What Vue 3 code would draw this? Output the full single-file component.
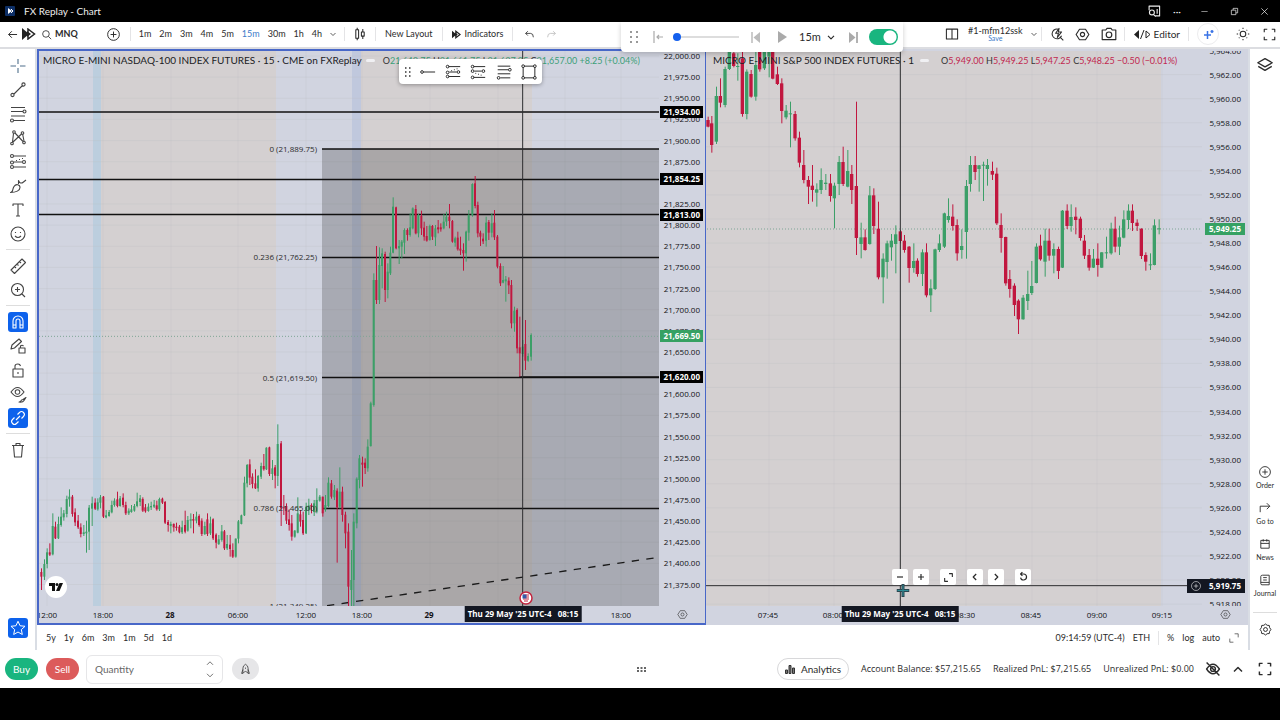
<script setup>
import { h, ref } from 'vue'

const o = (x, y, r) => `M${x - r} ${y}a${r} ${r} 0 1 0 ${2 * r} 0a${r} ${r} 0 1 0 ${-2 * r} 0z`
const expand = 'M3 7V3h4M13 3h4v4M17 13v4h-4M7 17H3v-4'
const hexagon = 'M6 3h8l4.500 7-4.500 7H6l-4.500-7z' + o(10, 10, 2.8)

const icons = {
  back: 'M17 10H4M9 5l-5 5 5 5',
  search: o(9, 9, 6) + 'M13.500 13.500l5 5',
  plus: o(10, 10, 9) + 'M10 5.5v9M5.5 10h9',
  chevron: 'M5 8l5 5 5-5',
  up: 'M5 13l5-5 5 5',
  left: 'M12 5l-5 5 5 5',
  right: 'M8 5l5 5-5 5',
  minus: 'M5 10h10',
  add: 'M5 10h10M10 5v10',
  reset: 'M7 5h4a5 5 0 1 1-5 6M9 2L6 5l3 3',
  maximize: 'M11 3h6v6M9 17H3v-6',
  candles: 'M6 1v3M6 16v3M4 4h4v12H4zM14 3v4M14 13v4M12 7h4v6h-4z',
  undo: 'M7 4L3 8l4 4M3 8h9q5 0 5 7',
  redo: 'M13 4l4 4-4 4M17 8H8q-5 0-5 7',
  layout: 'M2 3h16v14H2zM10 3v14',
  quick: 'M13 3.500a7 7 0 1 0 3.500 9M14 14l5 5M13 2L8 9h4l-1.500 6 6-8H12z',
  hexagon,
  camera: 'M1.500 5H6l1.500-2h5L14 5h4.500v12h-17z' + o(10, 11, 3.5),
  sun: o(10, 10, 4) + 'M10 1v2M10 17v2M1 10h2M17 10h2M4 4l1 1M15 15l1 1M4 16l1-1M15 5l1-1',
  expand,
  cross: 'M10 3v5M10 12v5M2.500 10h5.500M12 10h5.500',
  trend: o(4.500, 15, 1.6) + o(15.500, 4.500, 1.6) + 'M6 14L14.500 5.500',
  fib: 'M3 3.500h14M3 7.500h12M3 12h14M6 16.500h11' + o(16.500, 7.500, 1.5) + o(4, 16.500, 1.5),
  pattern: o(6, 4, 1.3) + o(14.500, 5, 1.3) + o(4, 15.500, 1.3) + o(16, 14.500, 1.3) + 'M5.500 5.500L4.500 14M14.700 6.500L16 13M7 5L15 13.500M5 14L13.500 6',
  forecast: 'M5 4h13M6 10h8M5 15h13M8 8.500h1M11 7.500h1M14 6.500h1' + o(4, 4, 1.5) + o(4, 10.500, 1.5) + o(16, 10, 1.5) + o(4, 15, 1.5),
  forecastDown: 'M5 4h13M6 9h8M5 16h13M7 11.500h1M10 12.500h1M13 13.500h1' + o(4, 4, 1.5) + o(4, 9, 1.5) + o(16, 9, 1.5) + o(4, 16, 1.5),
  brush: 'M2.500 16.500c3 0 1.500-3 3.500-6s6-2 6 1-4 5-9.500 5zM10.500 8V4.500c1 2.500 2.500 3.500 5 1.500L18 4',
  text: 'M5 6V4h10v2M10 4v12M8 16h4',
  smile: o(10, 10, 7) + 'M7.500 8v1M12.500 8v1M7 12q3 3 6 0',
  ruler: 'M3 14L14 3l3.500 3.500-11 11zM11.500 5.500l1.500 1.500M9 8l1.500 1.500M6.500 10.500l1.500 1.500',
  zoom: o(9.500, 9.500, 6) + 'M14 14l3 3M9.500 7v5M7 9.500h5',
  magnet: 'M5 16V9a5 5 0 0 1 10 0v7h-3V9a2 2 0 0 0-4 0v7zM5 13h3M12 13h3',
  pencilLock: 'M3 13l1-4 7-6 2.500 2.500L6.500 12zM11 12h6v5h-6zM12.500 12v-2q1.500-1.500 3 0',
  lock: 'M5 9h10v8H5zM7 9V6q0-2 3-2 2 0 2.500 2M10 12v2',
  eye: 'M3 8q6.500-9 13 0-6.500 9-13 0z' + o(9.500, 8, 2.3) + 'M11 18c2 0 2-2.500 4-2.500l3-2-2 3q-1 2-5 1.500z',
  link: 'M8 12l4-4M9.500 6.500l2-2a2.800 2.800 0 0 1 4 4l-2 2M10.500 13.500l-2 2a2.800 2.800 0 0 1-4-4l2-2',
  trash: 'M4 5.500h12M8 5V3.500h4V5M5.500 5.500L6.500 17h7l1-11.500',
  star: 'M10 2.500l2.300 5 5.500.6-4.100 3.700 1.100 5.400-4.800-2.700-4.800 2.700 1.100-5.400L2.200 8.100l5.500-.6z',
  hline: 'M6 10h13' + o(4.500, 10, 1.5),
  rect: 'M4.500 3.500h11M4.500 16.500h11M3.500 4.500v11M16.500 4.500v11' + o(3.500, 3.500, 1.5) + o(16.500, 3.500, 1.5) + o(3.500, 16.500, 1.5) + o(16.500, 16.500, 1.5),
  layers: 'M10 3l8 4.500-8 4.500-8-4.500zM2.500 11.500L10 16l7.500-4.500',
  goto: 'M2 17V7h16M13 2l5 5-5 5',
  news: 'M3 4h14v13H3zM3 9h14M7 2v4M13 2v4',
  journal: 'M6 2h11v16H5q-2 0-2-2V4q0-2 3-2zM3 14h14M7 6h6M7 10h6',
  gear: 'M10 1.500l2.500 2 3.300.300.500 3.200 2 3-2 3-.500 3.200-3.300.300-2.500 2-2.500-2-3.300-.300-.500-3.200-2-3 2-3 .500-3.200 3.300-.300z' + o(10, 10, 3),
  rocket: 'M6 16V8q0-4 4-6 4 2 4 6v8q-2-3-4-3t-4 3zM6 10l-2 6h2M14 10l2 6h-2M10 7v2',
  eyeOff: 'M2 10q8-12 16 0-8 12-16 0z' + o(10, 10, 3) + 'M2 2l16 16',
  capture: 'M3 9V3h15v14h-6M14.500 7v7' + o(7, 12, 3.5) + 'M9.500 15l3 3',
  dash: 'M1 10h18',
  restore: 'M3 7h10v10H3zM7 7V3h10v10h-4',
  close: 'M3 3l14 14M17 3L3 17'
}
const Icon = ({ name, size = 20 }) =>
  h('svg', { class: 'icon', width: size, height: size, viewBox: '0 0 20 20', 'aria-hidden': 'true' }, [h('path', { d: icons[name] })])
Icon.props = ['name', 'size']

const quantity = ref('')
const replay = ref(true)
const speed = ref(0)

const intervals = ['1m', '2m', '3m', '4m', '5m', '15m', '30m', '1h', '4h']
const ranges = ['5y', '1y', '6m', '3m', '1m', '5d', '1d']
const tools = [
  ['cross', 'trend', 'fib', 'pattern', 'forecast', 'brush', 'text', 'smile'],
  ['ruler', 'zoom'],
  ['magnet', 'pencilLock', 'lock', 'eye', 'link'],
  ['trash']
]
const activeTools = ['magnet', 'link']
const sideItems = [['plus', 'Order'], ['goto', 'Go to'], ['news', 'News'], ['journal', 'Journal']]

/* plot frames in window pixels; drawings use three units per pixel */
const L = { x: 39, y: 51, w: 620, h: 555 }
const R = { x: 706, y: 51, w: 496, h: 555 }
const box = f => `${f.x * 3} ${f.y * 3} ${f.w * 3} ${f.h * 3}`
const top = y => ({ top: ((y - 51) / 555) * 100 + '%' })
const left = (f, x) => ({ left: ((x - f.x) / f.w) * 100 + '%' })

const fmt = n => n.toLocaleString('en-US', { minimumFractionDigits: 2 })
const pricesL = Array.from({ length: 26 }, (_, i) => ({ v: 22000 - i * 25, y: 56 + i * 21.14 })).filter(p => p.v !== 21850)
const pricesR = Array.from({ length: 24 }, (_, i) => ({ v: 5964 - i * 2, y: 50.5 + i * 24.07 }))
const tagsL = [['21,934.00', 112], ['21,854.25', 179], ['21,813.00', 215], ['21,620.00', 377]]
const timesL = [['12:00', 47], ['18:00', 103], ['28', 170, 1], ['06:00', 238], ['12:00', 306], ['18:00', 362], ['29', 429, 1], ['18:00', 621]]
const timesR = [['07:45', 768], ['08:00', 833], ['08:30', 965], ['08:45', 1031], ['09:00', 1097], ['09:15', 1162]]
const gridR = [769, 834, 900, 966, 1032, 1097, 1162]
const gridL = [47, 103, 171, 238, 306, 362, 430, 498, 565, 621]
const fibs = [['0 (21,889.75)', 149], ['0.236 (21,762.25)', 257], ['0.5 (21,619.50)', 378], ['0.786 (21,465.00)', 508], ['1 (21,349.25)', 606]]
const levels = [[39, 112], [322, 149], [39, 179.5], [39, 214.5], [322, 257.5], [322, 377.5], [322, 508.5]]

/* x, high, body top, body bottom, low; "r" marks a falling bar */
const parse = (ox, oy, text) =>
  text.trim().split(/[;\n]+/).map(row => {
    const [x, hi, t, b, lo, r] = row.trim().split(/\s+/)
    return { x: +x + ox, hi: +hi + oy, t: +t + oy, b: Math.max(+b, +t + 3) + oy, lo: +lo + oy, down: r === 'r' }
  })
const barsL = [
  ...parse(108, 1200, `16 505 516 530 570 r;25 478 492 530 540;33 445 457 492 505;41 430 457 464 468 r;50 340 378 463 466;58 365 380 415 417 r;67 350 372 415 417;75 322 350 375 380;83 330 340 352 362;92 287 297 342 352;100 268 290 298 320;109 285 290 342 350 r;117 325 337 367 378 r;126 345 362 382 387 r;134 370 382 402 412 r;143 375 397 402 408;151 362 395 400 458;159 315 323 395 450;168 290 310 326 378;177 295 308 326 330 r;185 295 307 328 332;193 285 292 308 325;202 288 290 350 354 r;210 330 346 352 355;219 330 336 348 350;227 302 315 337 340;235 295 302 315 320;244 275 298 318 322 r;252 288 295 318 320;261 280 293 315 322 r;269 305 315 340 345 r;278 325 332 340 345;286 315 328 336 338;295 312 318 332 335;303 278 304 318 322;312 285 295 306 318;320 292 297 332 336 r;328 312 322 334 338 r;337 310 320 333 335;345 305 318 322 330;354 300 314 320 324;362 302 316 328 332 r;370 293 297 328 333;379 293 296 308 312 r;387 303 306 368 372 r;396 360 366 375 395 r;404 365 372 378 400;413 370 372 382 395 r;421 368 380 384 392 r;430 375 380 397 400 r;438 362 382 397 402;447 332 375 395 400 r;455 348 360 392 395;464 340 358 362 385;472 342 357 362 400 r;481 335 350 362 370;489 343 348 375 380 r;497 355 362 402 408 r;506 365 378 402 405;514 340 358 402 408 r;523 350 370 400 405;531 355 358 415 420 r;540 400 404 428 445 r;548 405 418 432 435;557 375 394 420 425;565 390 394 445 450 r;573 405 432 445 450;582 405 434 447 470 r;590 430 450 470 474 r;599 415 416 470 473;607 360 364 416 430;616 344 346 372 373;625 230 248 346 348;633 192 195 250 262;641 178 193 233 255 r;649 220 230 252 265 r;658 208 250 265 267 r;666 225 228 265 275;675 188 198 230 237;683 162 198 208 212 r;691 142 143 208 210;700 140 142 222 228 r;709 180 205 222 240;717 195 202 227 265 r;725 73 132 228 258;735 123 130 325 378 r;743 285 322 325 345 r;751 310 318 362 372 r;759 328 358 375 392 r;767 345 370 410 422 r;776 390 392 410 413;785 292 340 398 400;793 330 343 365 380 r;801 335 360 400 405 r;810 308 320 400 402;818 296 316 330 345;826 310 315 320 340 r;834 300 310 336 348;842 265 300 335 340;851 285 290 302 305;860 290 290 340 350 r;868 285 315 328 335;877 232 248 318 322;886 240 250 290 296 r;895 255 270 292 300;903 265 272 322 488 r;911 202 275 320 325;919 260 275 345 365 r;928 335 344 400 445 r;937 370 395 560 620 r;946 450 540 570 620;953 340 365 540 620;962 232 236 370 385;970 165 175 240 265;979 170 188 194 260 r;987 175 188 204 222 r;995 118 140 205 215;1004 5 10 138 140`),
  ...parse(960, 420, `161 400 420 795 800;169 318 420 480 492 r;178 322 375 480 492;186 325 340 378 445;195 335 342 450 486 r;203 370 395 450 475;211 320 338 400 405;219 172 200 338 340;228 200 202 325 328 r;237 300 318 325 372;245 300 305 320 355;253 265 270 308 342;262 265 270 285 302 r;270 220 262 285 290;278 202 205 265 268;287 195 207 280 283 r;295 222 225 280 292;304 212 228 265 285 r;312 245 263 290 302 r;320 258 288 302 305 r;329 254 258 300 302;337 255 258 290 300 r;346 255 265 292 318;354 240 262 268 280 r;362 250 262 268 275 r;371 222 245 265 268;379 215 230 245 258;388 192 230 243 265 r;397 240 243 305 308 r;405 290 295 308 320;413 275 293 328 332 r;421 290 326 332 345 r;430 310 330 340 392 r;438 272 275 340 365;446 210 225 278 302;457 130 132 225 230;465 108 130 198 205 r;473 185 195 280 292 r;481 272 278 290 318 r;489 280 296 304 312 r;498 230 248 302 320;506 240 246 278 300 r;515 220 250 278 292;523 210 248 292 300 r;532 285 290 380 385 r;541 370 378 430 438 r;549 378 420 428 430;557 408 418 424 485;566 412 422 436 462 r;574 420 435 550 565 r;583 500 512 550 575;591 505 510 625 640 r;599 530 622 640 710 r;608 600 620 642 650;616 540 612 662 690 r;624 640 648 662 665;633 580 585 650 662`)
]
const barsR = [
  ...parse(2100, 150, `24 200 210 230 232 r;35 198 220 285 308 r;49 110 138 275 282;61 85 138 158 172 r;75 50 57 165 172;88 -10 0 57 60;101 -10 10 48 52 r;113 10 48 51 92;127 -10 25 192 200 r;140 58 65 192 208;153 60 72 140 143 r;167 -10 45 140 152;179 -10 0 58 65 r;193 -10 0 55 60;207 -10 0 20 82;218 -10 0 86 88 r;232 50 73 102 105 r;245 85 100 183 220 r;258 165 182 202 208;271 155 190 193 292;285 183 192 265 272 r;298 245 263 338 352 r;311 300 345 390 400 r;325 378 390 410 462 r;337 345 407 420 455 r;350 400 418 428 470;363 355 390 420 432;377 372 398 402 420;391 372 400 438 455 r;403 398 407 445 535;417 318 336 402 435;429 290 336 402 408 r;443 300 363 410 412;455 345 372 420 462 r;469 155 408 564 615 r;483 518 562 582 625;495 538 562 600 602 r;509 408 436 582 584;521 415 436 528 552 r;535 455 536 682 688 r;549 610 626 682 760;561 572 580 636 686;574 552 572 592 632;587 526 553 582 670;601 540 544 573 580 r;613 555 572 600 608 r;627 588 590 654 698 r;641 580 633 654 668;652 625 632 672 680 r;667 598 607 672 708;679 580 607 736 742 r;692 688 715 736 786;705 596 598 717 720;718 553 580 600 606;733 488 490 590 594;745 445 498 510 518;758 463 500 528 542 r;771 508 525 610 632 r;785 538 588 600 626;799 390 408 546 626`),
  ...parse(2850, 390, `61 78 105 162 185;75 78 105 126 150 r;87 105 106 117 185;100 95 104 107 213;112 87 105 117 167;127 95 123 134 150 r;140 113 131 280 285 r;153 250 285 324 368 r;167 320 321 460 467 r;179 420 447 477 503 r;193 460 467 525 558 r;205 508 512 568 612 r;219 495 503 568 569;233 422 492 513 540;245 393 468 489 495;259 340 350 459 460;271 314 347 388 392 r;285 296 332 395 440;297 296 332 377 392 r;311 340 357 377 430;325 350 357 423 447 r;337 240 242 413 414;351 223 242 288 297 r;363 223 261 288 305;377 232 260 270 313 r;391 260 266 324 332 r;403 315 332 377 387 r;417 357 375 413 422 r;430 357 386 413 414;443 340 386 405 440 r;455 366 367 413 414;469 320 367 370 386;483 278 296 370 374;495 260 296 350 367 r;508 287 322 350 375;521 241 268 323 325;535 223 242 270 297;547 223 242 279 303 r;561 268 278 288 303 r;574 295 296 378 387 r;587 367 375 395 422 r;601 370 403 406 420;613 268 286 405 406;627 268 295 298 313`)
]
</script>

<template>
  <div class="app">
    <header class="titlebar">
      <svg class="app-logo" width="10" height="10" viewBox="0 0 10 10"><rect width="10" height="10" rx="1" fill="#0d2f66" /><path d="M3 2l4 3-4 3z" fill="#fff" /><path d="M6 3l2 2-2 2" fill="none" stroke="#fff" /></svg>
      <span class="app-title">FX Replay - Chart</span>
      <div class="window-buttons">
        <button aria-label="Capture"><Icon name="capture" :size="14" /></button>
        <button aria-label="More">···</button>
        <button aria-label="Minimize"><Icon name="dash" :size="7" /></button>
        <button aria-label="Restore"><Icon name="restore" :size="9" /></button>
        <button aria-label="Close"><Icon name="close" :size="9" /></button>
      </div>
    </header>

    <nav class="toolbar">
      <button class="w14" aria-label="Back"><Icon name="back" :size="13" /></button>
      <button class="w20" aria-label="FX Replay"><svg width="14" height="12" viewBox="0 0 14 12"><path d="M0 0l7 6-7 6z" fill="#222" /><path d="M6 1l6.500 5L6 11z" fill="none" stroke="#222" stroke-width="1.500" /><path d="M5 3l4 3-4 3z" fill="#222" /></svg></button>
      <button class="symbol"><Icon name="search" :size="11" /><b>MNQ</b></button>
      <button class="w20" aria-label="Compare"><Icon name="plus" :size="13" /></button>
      <i class="sep"></i>
      <div class="intervals">
        <button v-for="i in intervals" :key="i" :class="{ on: i === '15m' }">{{ i }}</button>
      </div>
      <button class="w14" aria-label="More intervals"><Icon name="chevron" :size="10" /></button>
      <i class="sep near"></i>
      <button class="w30" aria-label="Chart type"><Icon name="candles" :size="14" /></button>
      <i class="sep"></i>
      <button class="labelled">New Layout</button>
      <i class="sep"></i>
      <button class="labelled"><svg width="9" height="9" viewBox="0 0 14 12"><path d="M0 0l7 6-7 6z" fill="#222" /><path d="M6 1l6.500 5L6 11z" fill="none" stroke="#222" stroke-width="2" /><path d="M5 3l4 3-4 3z" fill="#222" /></svg>Indicators</button>
      <i class="sep"></i>
      <button class="w20" aria-label="Undo"><Icon name="undo" :size="11" /></button>
      <button class="w24 faint" aria-label="Redo"><Icon name="redo" :size="11" /></button>
      <div class="grow"></div>
      <button class="w20" aria-label="Layout"><Icon name="layout" :size="14" /></button>
      <button class="save"><span>#1-mfm12ssk</span><small>Save</small></button>
      <button class="w14" aria-label="Layouts"><Icon name="chevron" :size="10" /></button>
      <i class="sep none"></i>
      <button class="w30" aria-label="Quick search"><Icon name="quick" :size="14" /></button>
      <button class="w22" aria-label="Settings"><Icon name="hexagon" :size="15" /></button>
      <button class="w30" aria-label="Snapshot"><Icon name="camera" :size="16" /></button>
      <i class="sep none"></i>
      <button class="editor"><svg width="17" height="9" viewBox="0 0 17 9"><path d="M5 0v9L0 4.500z" fill="#222" /><path d="M6.500 9L10 0" stroke="#222" /><path d="M12 1v7l4-3.500z" fill="none" stroke="#222" /></svg>Editor</button>
      <i class="sep"></i>
      <button class="spark" aria-label="Assistant"><svg width="11" height="11" viewBox="0 0 11 11"><path d="M4.500 2v8M1 6h7M9 1v3M7.500 2.500h3" stroke="#3973e6" stroke-width="1.500" /></svg></button>
      <button class="w30" aria-label="Theme"><Icon name="sun" :size="14" /></button>
      <button class="w22" aria-label="Full screen"><Icon name="expand" :size="15" /></button>
    </nav>

    <main class="main">
      <aside class="tools">
        <template v-for="(group, g) in tools" :key="g">
          <i v-if="g" class="rule"></i>
          <button v-for="t in group" :key="t" :class="[t, { active: activeTools.includes(t) }]" :aria-label="t"><Icon :name="t" /></button>
        </template>
        <div class="grow"></div>
        <button class="active favourite" aria-label="Favourites"><Icon name="star" :size="18" /></button>
      </aside>

      <section class="center">
        <div class="charts">
          <article class="chart selected">
            <div class="plot">
              <svg class="canvas" :viewBox="box(L)" preserveAspectRatio="none">
                <rect x="117" y="153" width="1860" height="1665" fill="#d1d4e0" />
                <rect x="279" y="153" width="24" height="1665" fill="#bccede" />
                <rect x="303" y="153" width="525" height="1665" fill="#d4d0d1" />
                <rect x="1056" y="153" width="27" height="1665" fill="#c0c8dd" />
                <rect x="1083" y="153" width="513" height="1665" fill="#d4d0d1" />
                <line v-for="p in pricesL" :key="p.v" class="grid" x1="117" x2="1977" :y1="p.y * 3" :y2="p.y * 3" />
                <line v-for="x in gridL" :key="x" class="grid" y1="153" y2="1818" :x1="x * 3" :x2="x * 3" />
                <rect x="966" y="447" width="1011" height="1371" fill="#323434" fill-opacity=".26" />
                <line x1="117" x2="1977" y1="1009" y2="1009" class="last" />
                <line v-for="l in levels" :key="l[1]" :x1="l[0] * 3" x2="1977" :y1="l[1] * 3" :y2="l[1] * 3" class="level" />
                <line x1="1557" x2="1977" y1="1131" y2="1131" class="level" />
                <line x1="981" y1="1817" x2="1962" y2="1674" class="trend-line" />
                <g v-for="b in barsL" :key="b.x" :class="b.down ? 'down' : 'rise'">
                  <rect :x="b.x - 1" :y="b.hi" width="3" :height="b.lo - b.hi" />
                  <rect :x="b.x - 3" :y="b.t" width="6" :height="b.b - b.t" />
                </g>
                <line x1="1568" x2="1568" y1="153" y2="1818" class="crosshair" />
              </svg>
              <span v-for="f in fibs" :key="f[0]" class="fib-label" :style="top(f[1])">{{ f[0] }}</span>
              <div class="legend">
                <span>MICRO E-MINI NASDAQ-100 INDEX FUTURES · 15 · CME on FXReplay</span><i class="pill"></i>
                <span class="ohlc gain"><b>O</b>21,648.75 <b>H</b>21,661.75 <b>L</b>21,637.25 <b>C</b>21,657.00 +8.25 (+0.04%)</span>
              </div>
              <a class="tv" href="#" aria-label="TradingView"><svg width="22" height="22" viewBox="0 0 22 22"><circle cx="11" cy="11" r="11" fill="#fff" /><path d="M4 7h6v8H7v-5H4zM14.500 7H18l-3.500 8H11z" fill="#111" /><circle cx="12" cy="8.500" r="1.500" fill="#111" /></svg></a>
              <svg class="flag" width="14" height="14" viewBox="0 0 14 14" :style="left(L, 526)"><circle cx="7" cy="7" r="6" fill="#fff" stroke="#c3243f" stroke-width="1.500" /><path d="M4 4h6M4 6h6M4 8h6M5 10h4" stroke="#c3243f" /><path d="M3.500 3.500h4v4h-4z" fill="#345aa8" /></svg>
            </div>
            <div class="prices">
              <span v-for="p in pricesL" :key="p.v" :style="top(p.y)">{{ fmt(p.v) }}</span>
              <span v-for="t in tagsL" :key="t[0]" class="tag" :style="top(t[1])">{{ t[0] }}</span>
              <span class="tag green" :style="top(336)">21,669.50</span>
            </div>
            <div class="times">
              <span v-for="t in timesL" :key="t[1]" :class="{ strong: t[2] }" :style="left(L, t[1])">{{ t[0] }}</span>
              <span class="stamp" :style="left(L, 523)">Thu 29 May '25 UTC-4 &nbsp; 08:15</span>
            </div>
            <button class="corner" aria-label="Axis settings"><Icon name="hexagon" :size="11" /></button>
          </article>

          <article class="chart second">
            <div class="plot">
              <svg class="canvas" :viewBox="box(R)" preserveAspectRatio="none">
                <rect x="2118" y="153" width="1365" height="1665" fill="#d4d0d1" />
                <rect x="3483" y="153" width="123" height="1665" fill="#d1d4e0" />
                <line v-for="p in pricesR" :key="p.v" class="grid" x1="2118" x2="3606" :y1="p.y * 3" :y2="p.y * 3" />
                <line v-for="x in gridR" :key="x" class="grid" y1="153" y2="1818" :x1="x * 3" :x2="x * 3" />
                <line x1="2121" x2="3606" y1="687" y2="687" class="last" />
                <g v-for="b in barsR" :key="b.x" :class="b.down ? 'down' : 'rise'">
                  <rect :x="b.x - 1" :y="b.hi" width="3" :height="b.lo - b.hi" />
                  <rect :x="b.x - 5" :y="b.t" width="10" :height="b.b - b.t" />
                </g>
                <line x1="2701" x2="2701" y1="153" y2="1818" class="crosshair" />
                <line x1="2118" x2="3606" y1="1757" y2="1757" class="crosshair" />
              </svg>
              <div class="legend">
                <span>MICRO E-MINI S&amp;P 500 INDEX FUTURES · 1</span><i class="pill"></i>
                <span class="ohlc loss"><b>O</b>5,949.00 <b>H</b>5,949.25 <b>L</b>5,947.25 <b>C</b>5,948.25 −0.50 (−0.01%)</span>
              </div>
              <div class="chart-buttons">
                <button aria-label="Zoom out"><Icon name="minus" :size="12" /></button>
                <button aria-label="Zoom in"><Icon name="add" :size="12" /></button>
                <button class="apart" aria-label="Maximize"><Icon name="maximize" :size="11" /></button>
                <button class="apart" aria-label="Scroll left"><Icon name="left" :size="12" /></button>
                <button aria-label="Scroll right"><Icon name="right" :size="12" /></button>
                <button class="apart" aria-label="Reset"><Icon name="reset" :size="12" /></button>
              </div>
              <svg class="cursor" width="13" height="13" viewBox="0 0 13 13" :style="left(R, 903)"><path d="M6.500 0v13M0 6.500h13" stroke="#2a4650" stroke-width="3" /><path d="M6.500 1v11M1 6.500h11" stroke="#2f8d96" /></svg>
            </div>
            <div class="prices">
              <span v-for="p in pricesR" :key="p.v" :style="top(p.y)">{{ fmt(p.v) }}</span>
              <span class="tag green" :style="top(229)">5,949.25</span>
              <span class="tag cross-tag" :style="top(585.5)"><Icon name="plus" :size="10" />5,919.75</span>
            </div>
            <div class="times">
              <span v-for="t in timesR" :key="t[1]" :style="left(R, t[1])">{{ t[0] }}</span>
              <span class="stamp" :style="left(R, 900)">Thu 29 May '25 UTC-4 &nbsp; 08:15</span>
            </div>
            <button class="corner" aria-label="Axis settings"><Icon name="hexagon" :size="11" /></button>
          </article>
        </div>

        <div class="range-bar">
          <button v-for="r in ranges" :key="r">{{ r }}</button>
          <div class="grow"></div>
          <button>09:14:59 (UTC-4)</button>
          <button>ETH</button>
          <i class="sep"></i>
          <button>%</button>
          <button>log</button>
          <button>auto</button>
          <button aria-label="Maximize"><Icon name="maximize" :size="12" /></button>
        </div>
      </section>

      <aside class="side">
        <button class="layers" aria-label="Object tree"><Icon name="layers" :size="18" /></button>
        <div class="grow"></div>
        <button v-for="s in sideItems" :key="s[1]" class="side-item"><Icon :name="s[0]" :size="12" />{{ s[1] }}</button>
        <i class="rule"></i>
        <button class="gear" aria-label="Settings"><Icon name="gear" :size="13" /></button>
      </aside>
    </main>

    <footer class="trade-bar">
      <div class="order">
        <button class="buy">Buy</button>
        <button class="sell">Sell</button>
        <div class="quantity">
          <input v-model="quantity" type="text" placeholder="Quantity" aria-label="Quantity" />
          <div class="steps">
            <button aria-label="Increase"><Icon name="up" :size="12" /></button>
            <button aria-label="Decrease"><Icon name="chevron" :size="12" /></button>
          </div>
        </div>
        <button class="rocket" aria-label="Quick trade"><Icon name="rocket" :size="13" /></button>
      </div>
      <svg width="9" height="5" viewBox="0 0 9 5"><path d="M0 1h2M3.500 1h2M7 1h2M0 4h2M3.500 4h2M7 4h2" stroke="#333" stroke-width="1.500" /></svg>
      <div class="account">
        <button class="analytics"><svg width="10" height="9" viewBox="0 0 10 9"><path d="M.500 5h2v3.500h-2zM4 .500h2v8H4zM7.500 3h2v5.500h-2z" fill="#777" stroke="#333" /></svg>Analytics</button>
        <span class="figure">Account Balance: $57,215.65</span>
        <span class="figure">Realized PnL: $7,215.65</span>
        <span class="figure">Unrealized PnL: $0.00</span>
        <button class="w20 heavy hide" aria-label="Hide figures"><Icon name="eyeOff" :size="16" /></button>
        <button class="w30 heavy" aria-label="Expand"><Icon name="up" :size="16" /></button>
        <button class="w24 heavy" aria-label="Full screen"><Icon name="expand" :size="16" /></button>
      </div>
    </footer>
    <div class="black-strip"></div>

    <div class="draw-bar">
      <svg width="6" height="10" viewBox="0 0 6 10"><path d="M0 1h1.500M4 1h1.500M0 5h1.500M4 5h1.500M0 9h1.500M4 9h1.500" stroke="#333" stroke-width="1.500" /></svg>
      <button v-for="t in ['hline', 'forecast', 'forecastDown', 'fib', 'rect']" :key="t" :aria-label="t"><Icon :name="t" :size="18" /></button>
    </div>

    <div class="replay-bar">
      <svg width="8" height="12" viewBox="0 0 8 12"><path d="M0 1h2M6 1h2M0 6h2M6 6h2M0 11h2M6 11h2" stroke="#999" stroke-width="2" /></svg>
      <button class="jump" aria-label="Jump to"><svg width="10" height="12" viewBox="0 0 10 12"><path d="M1 0v12M10 6H4M6 4L4 6l2 2" fill="none" stroke="#aaa" stroke-width="1.200" /></svg></button>
      <input v-model="speed" class="speed" type="range" min="0" max="100" aria-label="Replay speed" />
      <button class="prev" aria-label="Step back"><svg width="9" height="11" viewBox="0 0 9 11"><path d="M1 0v11" stroke="#bbb" stroke-width="1.500" /><path d="M9 0v11L2.500 5.500z" fill="#bbb" /></svg></button>
      <button class="play" aria-label="Play"><svg width="9" height="12" viewBox="0 0 9 12"><path d="M0 0l9 6-9 6z" fill="#aaa" /></svg></button>
      <button class="step">15m<Icon name="chevron" :size="12" /></button>
      <button class="next" aria-label="Step forward"><svg width="9" height="11" viewBox="0 0 9 11"><path d="M8 0v11" stroke="#999" stroke-width="1.500" /><path d="M0 0v11l6.500-5.500z" fill="#aaa" /></svg></button>
      <input v-model="replay" class="switch" type="checkbox" aria-label="Replay mode" />
    </div>
  </div>
</template>

<style>
body { background: #000; }
</style>

<style scoped>
.app { position: relative; display: flex; flex-direction: column; min-height: 100vh; background: #fff; color: #2b2b2b; font: 10px/12px Lato, "Noto Sans", sans-serif; }
button { display: flex; align-items: center; justify-content: center; margin: 0; padding: 0; border: 0; background: none; color: inherit; font: inherit; white-space: nowrap; }
.icon { display: block; flex: none; overflow: visible; fill: none; stroke: currentColor; stroke-width: 1.1; stroke-linejoin: round; }
.grow { flex: 1; }
.w14 { width: 14px; } .w20 { width: 20px; } .w22 { width: 22px; } .w24 { width: 24px; } .w30 { width: 30px; }

.titlebar { display: flex; align-items: center; height: 22px; padding: 0 1px 0 5px; background: #000; color: #eee; }
.app-title { flex: 1; margin-left: 9px; }
.window-buttons { display: flex; }
.window-buttons button { width: 30px; }
.window-buttons button:nth-child(1) { width: 22px; }
.window-buttons button:nth-child(2) { width: 24px; }
.window-buttons .icon { stroke-width: 1.6; }

.toolbar { display: flex; align-items: center; height: 24px; padding: 0 0 1px 5px; border-bottom: 2px solid #dcdde1; font-size: 9px; }
.toolbar .icon { stroke-width: 1.5; }
.symbol { gap: 3px; margin: 0 26px 0 2px; }
.sep { flex: none; width: 1px; height: 14px; margin: 0 6px; background: #e4e4e6; }
.sep.near { margin: 0 0 0 4px; }
.sep.none { margin: 0; }
.intervals { display: flex; gap: 8px; margin: 0 4px 0 2px; }
.on { color: #3b7bc9; }
.labelled { gap: 4px; padding: 0 3px; }
.w30 + .sep { margin-left: 0; }
.faint { color: #bbb; }
.save { flex-direction: column; margin: 0 4px 0 6px; line-height: 9px; }
.save small { color: #3b7bc9; font-size: 7px; line-height: 7px; }
.editor { gap: 3px; margin: 0 2px 0 9px; font-size: 10px; }
.spark { box-sizing: border-box; width: 22px; height: 22px; margin: 0 9px 0 2px; border: 1px solid #ececee; border-radius: 50%; }

.main { display: flex; flex: 1; min-height: 0; }
.tools { display: flex; flex-direction: column; align-items: center; width: 35px; padding: 5px 0 10px; border-right: 2px solid #d9dde4; }
.tools button { width: 20px; height: 20px; margin: 2px 0; border-radius: 3px; color: #444; }
.tools .cross { color: #4f6f8c; }
.tools .active { background: #0d62ec; color: #fff; }
.rule { width: 24px; height: 1px; margin: 3px 0 4px; background: #ddd; }
.center { display: flex; flex: 1; flex-direction: column; min-width: 0; }
.charts { display: grid; flex: 1; grid-template-columns: 669fr 542fr; }
.chart { display: grid; grid-template-columns: 1fr 46px; grid-template-rows: 1fr 17px; background: #d1d4e0; }
.selected { border: solid #4867c8; border-width: 2px 1px 2px 2px; }
.second { padding: 2px 0; }
.plot, .prices, .times { position: relative; overflow: hidden; min-width: 0; }
.second .prices { overflow: visible; clip-path: inset(0 0 0 -20px); }
.canvas { position: absolute; inset: 0; width: 100%; height: 100%; }
.grid { stroke: #b9bdc3; stroke-width: 3; stroke-opacity: .28; }
.last { stroke: #7fa596; stroke-width: 3; stroke-dasharray: 3 6; }
.level { stroke: #111; stroke-width: 5; }
.trend-line { stroke: #1a1a1a; stroke-width: 4; stroke-dasharray: 22 22; }
.crosshair { stroke: #2e2e30; stroke-width: 3; }
.rise { fill: #3c9f68; }
.down { fill: #c1173f; }
.legend { position: absolute; top: 3px; left: 4px; display: flex; align-items: center; white-space: nowrap; font-size: 10px; line-height: 13px; color: #202124; }
.second .legend { left: 7px; }
.pill { width: 9px; height: 3px; margin: 0 12px 0 6px; border-radius: 2px; background: #f0f0f3; }
.selected .pill { margin: 0 8px 0 4px; }
.ohlc { font-size: 9px; }
.ohlc b { font-weight: 400; color: #333; }
.gain { color: #3c9f78; }
.loss { color: #c1274f; }
.fib-label { position: absolute; right: 342px; transform: translateY(-50%); font: 500 8px/10px "Open Sans", sans-serif; }
.prices span, .times span { position: absolute; transform: translateY(-50%); font: 500 8px/10px "Open Sans", sans-serif; color: #101014; white-space: nowrap; }
.prices span { right: 5px; }
.second .prices span { right: 7px; }
.prices .tag { right: 2px; padding: 1px 3px; background: #000; color: #fff; font-weight: 700; }
.second .prices .tag { right: 3px; padding: 1px 4px; }
.prices .green { background: #35a163; }
.second .prices .cross-tag { display: flex; align-items: center; gap: 8px; height: 12px; background: #131722; }
.times span { top: 9px; transform: translate(-50%, -50%); }
.times .strong { font-weight: 700; }
.times .stamp { top: 8px; padding: 3px; background: #131722; color: #fff; font-weight: 700; }
.tv { position: absolute; left: 6px; bottom: 8px; height: 22px; }
.flag { position: absolute; bottom: 1px; transform: translateX(-50%); }
.cursor { position: absolute; bottom: 9px; transform: translateX(-50%); }
.chart-buttons { position: absolute; left: 186px; bottom: 21px; display: flex; gap: 5px; }
.chart-buttons button { width: 16px; height: 16px; border-radius: 2px; background: #fff; }
.chart-buttons .icon { stroke-width: 2; }
.chart-buttons .apart { margin-left: 6px; }

.range-bar { display: flex; align-items: center; gap: 8px; height: 25px; padding: 0 8px 0 9px; font-size: 9px; }
.range-bar .sep { margin: 0; }

.side { display: flex; flex-direction: column; align-items: center; width: 30px; padding: 7px 0 14px; border-left: 2px solid #d9dde4; }
.side-item { flex-direction: column; gap: 3px; height: 36px; font-size: 7px; line-height: 8px; }
.side .icon { stroke-width: 1.5; }
.side .rule { margin: 9px 0 10px; }

.trade-bar { display: flex; align-items: center; height: 38px; padding: 0 3px 0 5px; }
.order, .account { display: flex; flex: 1; align-items: center; }
.account { justify-content: flex-end; }
.buy, .sell { width: 33px; height: 22px; border-radius: 11px; background: #19b57f; color: #fff; }
.sell { margin: 0 7px 0 8px; background: #dc5b5b; }
.quantity { display: flex; align-items: center; width: 137px; height: 29px; box-sizing: border-box; border: 1px solid #e6e6e8; border-radius: 6px; }
.quantity input { flex: 1; min-width: 0; padding: 0 8px; border: 0; outline: 0; background: none; font: inherit; }
.quantity input::placeholder { color: #666; }
.steps { display: flex; flex-direction: column; margin-right: 6px; }
.rocket { width: 27px; height: 22px; margin-left: 9px; border-radius: 11px; background: #e6e6e8; }
.analytics { gap: 6px; width: 72px; height: 22px; border: 1px solid #d8d8da; border-radius: 12px; box-sizing: border-box; }
.figure { margin-left: 12px; white-space: nowrap; font: 500 9px/12px "Open Sans", sans-serif; }
.hide { margin-left: 9px; }
.heavy .icon { stroke-width: 1.8; }
.black-strip { height: 32px; background: #000; }

.draw-bar { position: absolute; top: 59px; left: 399px; display: flex; align-items: center; justify-content: space-between; box-sizing: border-box; width: 143px; height: 25px; padding: 0 4px 0 6px; border-radius: 4px; background: #fff; box-shadow: 0 1px 4px #0005; }
.replay-bar { position: absolute; top: 22px; left: 621px; display: flex; align-items: center; box-sizing: border-box; width: 282px; height: 30px; padding: 0 5px 0 9px; border-radius: 0 0 4px 4px; background: #fff; box-shadow: 0 2px 5px #0003; }
.jump { margin: 0 10px 0 15px; }
.speed { appearance: none; width: 66px; height: 10px; margin: 0; background: linear-gradient(#ddd, #ddd) center / 100% 2px no-repeat; }
.speed::-webkit-slider-thumb { appearance: none; width: 8px; height: 8px; border-radius: 50%; background: #1460ee; }
.prev { margin-left: 12px; }
.play { margin: 0 12px 0 18px; }
.step { gap: 4px; font-size: 11px; }
.step .icon { stroke-width: 2; }
.next { margin-left: 12px; }
.switch { appearance: none; width: 29px; height: 16px; margin: 0 0 0 auto; border-radius: 8px; background: radial-gradient(circle at 21px 8px, #fff 6px, transparent 7px) #19b57f; }
</style>
